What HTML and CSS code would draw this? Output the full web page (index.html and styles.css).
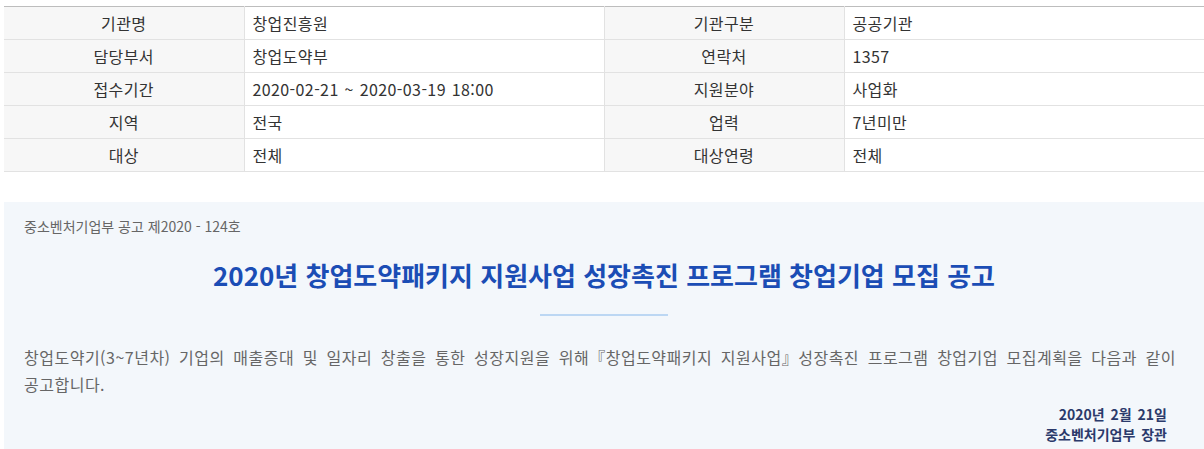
FILE: index.html
```html
<!DOCTYPE html>
<html lang="ko">
<head>
<meta charset="utf-8">
<link rel="stylesheet" href="styles.css">
</head>
<body>
<div class="page">
  <table class="info">
    <colgroup>
      <col class="c-label"><col class="c-value"><col class="c-label"><col class="c-value">
    </colgroup>
    <tbody>
      <tr><th>기관명</th><td>창업진흥원</td><th>기관구분</th><td>공공기관</td></tr>
      <tr><th>담당부서</th><td>창업도약부</td><th>연락처</th><td>1357</td></tr>
      <tr><th>접수기간</th><td>2020-02-21 ~ 2020-03-19 18:00</td><th>지원분야</th><td>사업화</td></tr>
      <tr><th>지역</th><td>전국</td><th>업력</th><td>7년미만</td></tr>
      <tr><th>대상</th><td>전체</td><th>대상연령</th><td>전체</td></tr>
    </tbody>
  </table>

  <section class="notice">
    <p class="notice-no">중소벤처기업부 공고 제2020 - 124호</p>
    <h1 class="notice-title">2020년 창업도약패키지 지원사업 성장촉진 프로그램 창업기업 모집 공고</h1>
    <div class="notice-bar"></div>
    <p class="notice-body">창업도약기(3~7년차) 기업의 매출증대 및 일자리 창출을 통한 성장지원을 위해『창업도약패키지 지원사업』성장촉진 프로그램 창업기업 모집계획을 다음과 같이 공고합니다.</p>
    <div class="notice-sign">
      <div>2020년 2월 21일</div>
      <div>중소벤처기업부 장관</div>
    </div>
  </section>
</div>
</body>
</html>
```

FILE: styles.css
```css
html, body {
  margin: 0;
  padding: 0;
  background: #ffffff;
}
body {
  font-family: "Noto Sans CJK KR", "Noto Sans", sans-serif;
  color: #333333;
  overflow: hidden;
}
.page {
  padding: 6px 0 0 4px;
  width: 1200px;
}
.info {
  width: 1200px;
  border-collapse: collapse;
  border-top: 1px solid #bdbdbd;
  table-layout: fixed;
  font-size: 16px;
  letter-spacing: 0.4px;
  word-spacing: 1px;
}
.c-label { width: 240px; }
.c-value { width: 360px; }
.info th,
.info td {
  height: 32px;
  padding: 0 8px;
  border-bottom: 1px solid #e2e2e2;
  line-height: 20px;
  vertical-align: middle;
  color: #333333;
}
.info th {
  background: #f7f7f7;
  font-weight: normal;
  text-align: center;
  border-right: 1px solid #e2e2e2;
}
.info td {
  text-align: left;
  border-right: 1px solid #e2e2e2;
}
.info tr td:last-child { border-right: none; }

.notice {
  margin-top: 30px;
  background: #f3f7fb;
  padding: 14px 20px 12px 20px;
  min-height: 260px;
}
.notice-no {
  margin: 0;
  font-size: 14px;
  line-height: 20px;
  color: #666666;
}
.notice-title {
  margin: 22px 0 0 0;
  text-align: center;
  font-size: 26px;
  line-height: 34px;
  font-weight: bold;
  color: #1b4db5;
}
.notice-bar {
  width: 128px;
  height: 2px;
  background: #bcd7f3;
  margin: 22px auto 0 auto;
}
.notice-body {
  margin: 28px 0 0 0;
  font-size: 16px;
  line-height: 27px;
  color: #666666;
  letter-spacing: 0.5px;
  word-spacing: 3.6px;
}
.notice-sign {
  margin-top: 6px;
  padding-right: 17px;
  text-align: right;
  font-size: 14px;
  line-height: 20px;
  font-weight: bold;
  color: #2b3a6b;
  word-spacing: 2px;
}
```
